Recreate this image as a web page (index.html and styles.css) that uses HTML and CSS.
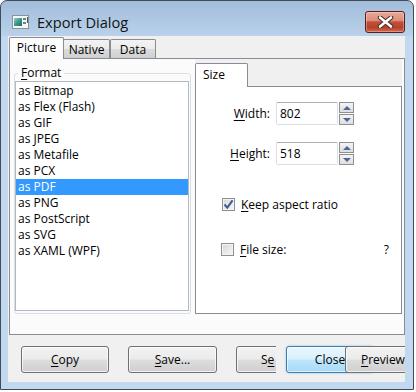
FILE: index.html
```html
<!DOCTYPE html>
<html lang="en">

<head>
    <meta charset="UTF-8">
    <meta name="viewport" content="width=device-width, initial-scale=1.0">
    <title>Export Dialog</title>
    <link rel="stylesheet" href="styles.css">
</head>

<body>

    <div class="window">

        <div class="titlebar">
            <svg class="app-icon" width="17" height="14" viewBox="0 0 17 14">
                <defs>
                    <linearGradient id="pic" x1="0" y1="0" x2="1" y2="1">
                        <stop offset="0" stop-color="#8fd0c8" />
                        <stop offset="0.5" stop-color="#3c9a8c" />
                        <stop offset="1" stop-color="#1d6a5c" />
                    </linearGradient>
                </defs>
                <rect x="0.5" y="0.5" width="16" height="13" fill="#f4f6f8" stroke="#8c9298" />
                <rect x="2" y="3" width="8" height="8" fill="url(#pic)" />
                <rect x="11" y="3" width="3" height="2" fill="#7a7f86" />
                <rect x="11" y="7" width="3" height="2" fill="#7a7f86" />
                <rect x="15" y="2" width="1" height="6" fill="#2a6b38" />
            </svg>
            <span class="title">Export Dialog</span>
            <button class="close-x">
                <svg width="17" height="12" viewBox="0 0 17 12">
                    <path d="M3 1.5 L14 10.5 M14 1.5 L3 10.5" stroke="#4a2a26" stroke-width="4.6" stroke-linecap="round" />
                    <path d="M3 1.5 L14 10.5 M14 1.5 L3 10.5" stroke="#fff" stroke-width="2.6" stroke-linecap="round" />
                </svg>
            </button>
        </div>

        <div class="client">

            <div class="tabs">
                <div class="tab active">Picture</div>
                <div class="tab tab-native">Native</div>
                <div class="tab tab-data">Data</div>
            </div>

            <div class="pane">

                <fieldset class="format">
                    <legend><u>F</u>ormat</legend>
                    <ul class="list">
                        <li>as Bitmap</li>
                        <li>as Flex (Flash)</li>
                        <li>as GIF</li>
                        <li>as JPEG</li>
                        <li>as Metafile</li>
                        <li>as PCX</li>
                        <li class="selected">as PDF</li>
                        <li>as PNG</li>
                        <li>as PostScript</li>
                        <li>as SVG</li>
                        <li>as XAML (WPF)</li>
                    </ul>
                </fieldset>

                <div class="size-ctl">
                    <div class="size-head">
                        <div class="size-tab">Size</div>
                    </div>
                    <div class="size-pane">

                        <div class="field">
                            <label><u>W</u>idth:</label>
                            <div class="textbox">802</div>
                            <div class="spin">
                                <span class="spin-btn up"></span>
                                <span class="spin-btn down"></span>
                            </div>
                        </div>

                        <div class="field field-second">
                            <label><u>H</u>eight:</label>
                            <div class="textbox">518</div>
                            <div class="spin">
                                <span class="spin-btn up"></span>
                                <span class="spin-btn down"></span>
                            </div>
                        </div>

                        <div class="check-row keep">
                            <span class="check">
                                <svg width="11" height="11" viewBox="0 0 11 11">
                                    <path d="M1.5 5.5 L4.3 8.6 L9.6 1.4" fill="none" stroke="#3d5a9a" stroke-width="2" />
                                </svg>
                            </span>
                            <span><u>K</u>eep aspect ratio</span>
                        </div>

                        <div class="check-row filesize">
                            <span class="check"></span>
                            <span><u>F</u>ile size:</span>
                            <span class="q">?</span>
                        </div>

                    </div>
                </div>
            </div>

            <div class="buttons">
                <button class="btn btn-copy"><u>C</u>opy</button>
                <button class="btn btn-save"><u>S</u>ave...</button>
                <div class="btn-clip">
                    <button class="btn btn-send">S<u>e</u></button>
                </div>
                <button class="btn btn-close">Close</button>
                <button class="btn btn-preview"><u>P</u>review</button>
            </div>

        </div>
    </div>

</body>

</html>
```

FILE: styles.css
```css
* {
    margin: 0;
    padding: 0;
}

ul li {
    list-style: none;
}

body {
    background: #fff;
    font-family: "Open Sans", "Noto Sans", sans-serif;
    font-size: 12px;
    color: #000;
}

u {
    text-decoration: underline;
    text-underline-offset: 2px;
}

/* window frame */
.window {
    width: 414px;
    height: 390px;
    box-sizing: border-box;
    border: 1px solid #3f4d5a;
    border-radius: 7px 7px 0 0;
    background: linear-gradient(#a2bddb 0, #b9d1ea 35px, #c2d8ef 36px, #c2d8ef 100%);
    padding: 0 8px 7px 7px;
    display: flex;
    flex-direction: column;
    overflow: hidden;
}

.titlebar {
    height: 35px;
    box-sizing: border-box;
    padding: 7px 0 0 4px;
    display: flex;
    align-items: center;
}

.app-icon {
    flex: none;
}

.title {
    margin-left: 8px;
    font-size: 14.6px;
    color: #141414;
    flex: 1;
}

.close-x {
    width: 40px;
    height: 22px;
    border: 1px solid #5b1f17;
    border-radius: 3px;
    background: linear-gradient(#e9a999 0%, #dc8f7c 42%, #c24f37 50%, #b7422c 78%, #d3694f 100%);
    box-shadow: inset 0 0 0 1px rgba(255, 255, 255, .3);
    display: flex;
    align-items: center;
    justify-content: center;
}

.client {
    flex: 1;
    background: #f0f0f0;
    padding-top: 1px;
    display: flex;
    flex-direction: column;
    overflow: hidden;
}

/* outer tabs */
.tabs {
    height: 21px;
    margin-left: 1px;
    display: flex;
    align-items: flex-end;
}

.tab {
    box-sizing: border-box;
    height: 19px;
    border: 1px solid #898c95;
    border-bottom: none;
    border-radius: 2px 2px 0 0;
    background: linear-gradient(#f3f3f3 0%, #ebebeb 50%, #dcdcdc 52%, #cfcfcf 100%);
    text-align: center;
    line-height: 18px;
    padding-top: 1px;
}

.tab.active {
    width: 55px;
    height: 22px;
    margin-bottom: -1px;
    background: #fcfcfc;
    line-height: 20px;
    padding-top: 0;
    position: relative;
    z-index: 1;
}

.tab-native {
    width: 47px;
    margin-left: -1px;
}

.tab-data {
    width: 46px;
}

.pane {
    width: 396px;
    height: 277px;
    box-sizing: border-box;
    margin-left: 1px;
    border: 1px solid #898c95;
    background: #fbfbfb;
    padding: 0 1px 0 4px;
    display: flex;
    align-items: flex-start;
    gap: 4px;
}

/* format group */
.format {
    width: 177px;
    margin-top: 7px;
    box-sizing: border-box;
    border: 1px solid #d5dfe5;
    border-radius: 3px;
    padding: 1px 1px 2px 0;
}

.format legend {
    margin-left: 3px;
    padding: 0 3px;
    line-height: 14px;
}

.list {
    height: 230px;
    box-sizing: border-box;
    border: 1px solid #b4b8c0;
    background: #fff;
    padding-top: 1px;
}

.list li {
    height: 16px;
    line-height: 16px;
    padding-left: 2px;
    white-space: nowrap;
}

.list li.selected {
    background: #3399ff;
    color: #fff;
}

/* size tab */
.size-ctl {
    width: 207px;
}

.size-head {
    height: 27px;
    background: #f0f0f0;
    display: flex;
    align-items: flex-end;
}

.size-tab {
    width: 53px;
    height: 24px;
    box-sizing: border-box;
    margin-bottom: -1px;
    border: 1px solid #898c95;
    border-bottom: none;
    border-radius: 2px 2px 0 0;
    background: #fff;
    padding-left: 7px;
    line-height: 22px;
    position: relative;
    z-index: 1;
}

.size-pane {
    height: 228px;
    box-sizing: border-box;
    border: 1px solid #898c95;
    background: #fff;
    padding-top: 15px;
}

.field {
    display: grid;
    grid-template-columns: 79px 62px 15px;
    column-gap: 1px;
    height: 23px;
}

.field-second {
    margin-top: 17px;
}

.field label {
    text-align: right;
    padding-right: 5px;
    line-height: 23px;
}

.textbox {
    box-sizing: border-box;
    border: 1px solid #dbdfe6;
    border-top-color: #abadb3;
    border-radius: 2px;
    background: #fff;
    padding-left: 3px;
    line-height: 21px;
}

.spin {
    display: flex;
    flex-direction: column;
    gap: 1px;
}

.spin-btn {
    height: 11px;
    box-sizing: border-box;
    border: 1px solid #8e8f8f;
    background: linear-gradient(#f4f4f4, #dedede);
    display: flex;
    align-items: center;
    justify-content: center;
}

.spin-btn::before {
    content: "";
    width: 0;
    height: 0;
    border-left: 4px solid transparent;
    border-right: 4px solid transparent;
}

.spin-btn.up::before {
    border-bottom: 4px solid #4e6796;
}

.spin-btn.down::before {
    border-top: 4px solid #4e6796;
}

.check-row {
    display: flex;
    align-items: center;
    height: 14px;
    padding: 0 12px 0 26px;
}

.keep {
    margin-top: 32px;
}

.filesize {
    margin-top: 31px;
    padding-left: 25px;
}

.check {
    width: 13px;
    height: 13px;
    box-sizing: border-box;
    border: 1px solid #8f8f8f;
    background: linear-gradient(135deg, #d6d6d6, #f8f8f8);
    box-shadow: inset 0 0 0 1px #f4f4f4;
    margin-right: 6px;
    display: flex;
    align-items: center;
    justify-content: center;
    flex: none;
}

.q {
    margin-left: auto;
}

/* bottom buttons */
.buttons {
    margin-top: 11px;
    padding-left: 13px;
    display: flex;
}

.btn {
    height: 27px;
    box-sizing: border-box;
    border: 1px solid #707070;
    border-radius: 3px;
    background: linear-gradient(#f2f2f2 0%, #ebebeb 48%, #dddddd 52%, #cfcfcf 100%);
    box-shadow: inset 0 0 0 1px rgba(255, 255, 255, .7);
    font-family: inherit;
    font-size: 12px;
    color: #000;
    flex: none;
    white-space: nowrap;
}

.btn-copy {
    width: 88px;
}

.btn-save {
    width: 89px;
    margin-left: 19px;
}

.btn-clip {
    width: 40px;
    margin-left: 19px;
    overflow: hidden;
    flex: none;
}

.btn-send {
    width: 88px;
    text-align: left;
    padding-left: 24px;
}

.btn-close {
    width: 88px;
    margin-left: 10px;
    border-color: #3c7fb1;
    background: linear-gradient(#eaf6fd 0%, #d9f0fc 48%, #bee6fd 52%, #a7d9f5 100%);
    box-shadow: inset 0 0 0 1px rgba(255, 255, 255, .6), 0 0 2px #6fb6e6;
}

.btn-preview {
    width: 76px;
    margin-left: -29px;
    text-align: left;
    padding-left: 15px;
}
```
